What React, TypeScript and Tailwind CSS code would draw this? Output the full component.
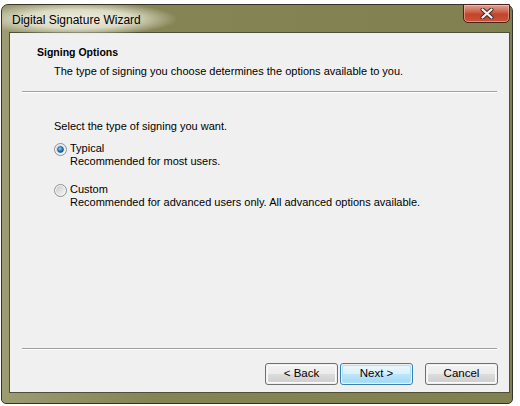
import React from "react";

const font = { fontFamily: '"Liberation Sans", Arial, sans-serif' };

function Radio({ checked }: { checked: boolean }) {
  return (
    <svg width="13" height="13" viewBox="0 0 13 13" className="shrink-0">
      <defs>
        <linearGradient id={checked ? "rbg1" : "rbg2"} x1="0" y1="0" x2="1" y2="1">
          <stop offset="0" stopColor="#cbcbcb" />
          <stop offset="1" stopColor="#f6f6f6" />
        </linearGradient>
        <radialGradient id="dot" cx="0.4" cy="0.35" r="0.7">
          <stop offset="0" stopColor="#8ad4ff" />
          <stop offset="0.5" stopColor="#2c8ad8" />
          <stop offset="1" stopColor="#0c3f7a" />
        </radialGradient>
      </defs>
      <circle cx="6.5" cy="6.5" r="6" fill="#f4f4f4" stroke="#8e8f8f" strokeWidth="1" />
      <circle cx="6.5" cy="6.5" r="4.5" fill={`url(#${checked ? "rbg1" : "rbg2"})`} />
      {checked && <circle cx="6.5" cy="6.5" r="3" fill="url(#dot)" stroke="#1c5180" strokeWidth="0.6" />}
    </svg>
  );
}

function Btn({ label, def }: { label: string; def?: boolean }) {
  return (
    <div
      className={`w-[73px] h-[22px] rounded-[3px] border ${def ? "border-[#3c7fb1]" : "border-[#707070]"} p-px`}
    >
      <div
        className={`w-full h-full rounded-[2px] border ${def ? "border-[#a8e4f8]" : "border-[#fbfbfb]"} flex items-center justify-center text-[11.5px] text-black leading-none`}
        style={{
          background: def
            ? "linear-gradient(#eaf6fd 0%, #d9f0fc 50%, #bee6fd 50%, #a7d9f5 100%)"
            : "linear-gradient(#f2f2f2 0%, #ebebeb 50%, #dddddd 50%, #cfcfcf 100%)",
        }}
      >
        <span>{label}</span>
      </div>
    </div>
  );
}

export default function App() {
  return (
    <div className="w-[520px] h-[406px] bg-white pt-[4px] pl-[1px]" style={font}>
      <div
        className="relative w-[512px] h-[400px] border border-[#34342a] rounded-t-[7px] rounded-b-[5px] flex flex-col"
        style={{ background: "linear-gradient(90deg, #9c9b72 0%, #858455 30%, #818050 100%)" }}
      >
        {/* title glow */}
        <div
          className="absolute left-0 top-0 w-[200px] h-[30px] pointer-events-none"
          style={{
            background:
              "radial-gradient(ellipse 100px 17px at 76px 14px, rgba(240,239,225,1) 0%, rgba(228,227,208,0.9) 55%, rgba(200,198,170,0) 100%)",
          }}
        />
        <div className="relative h-[27px] flex items-center pl-[10px] text-[12px] text-black">
          <span className="mt-[2px]">Digital Signature Wizard</span>
        </div>
        {/* close button */}
        <div
          className="absolute right-[2px] -top-px w-[47px] h-[19px] rounded-b-[5px] border border-[#4a2118] flex items-center justify-center"
          style={{
            background: "linear-gradient(#e0a394 0%, #cf6b55 35%, #c2442a 55%, #c9543b 100%)",
            boxShadow: "inset 0 0 0 1px rgba(255,220,210,0.45)",
          }}
        >
          <svg width="14" height="11" viewBox="0 0 14 11">
            <path d="M2.5 1.5 L11.5 9.5 M11.5 1.5 L2.5 9.5" stroke="#3b2420" strokeWidth="4" strokeLinecap="round" />
            <path d="M2.5 1.5 L11.5 9.5 M11.5 1.5 L2.5 9.5" stroke="#f2f2f2" strokeWidth="2.3" strokeLinecap="round" />
          </svg>
        </div>
        {/* content */}
        <div className="ml-[7px] mr-[2px] border border-[#4e4e3c] bg-[#f0f0f0] h-[361px] flex flex-col text-[11px] text-black">
          <div className="h-[58px] flex flex-col">
            <div className="pl-[27px] pt-[11px] font-bold leading-[16px] text-[10.5px]">Signing Options</div>
            <div className="pl-[44px] pt-[3px] leading-[16px]">
              The type of signing you choose determines the options available to you.
            </div>
          </div>
          <div className="mx-[12px] h-px bg-[#a0a0a0] shadow-[0_1px_0_#ffffff]" />
          <div className="flex-1 pl-[44px] pt-[28px] leading-[13px]">
            <div>Select the type of signing you want.</div>
            <div className="mt-[9px] flex items-start gap-[3px]">
              <div className="pt-[1px]">
                <Radio checked />
              </div>
              <div>
                <div>Typical</div>
                <div>Recommended for most users.</div>
              </div>
            </div>
            <div className="mt-[15px] flex items-start gap-[3px]">
              <div className="pt-[1px]">
                <Radio checked={false} />
              </div>
              <div>
                <div>Custom</div>
                <div>Recommended for advanced users only. All advanced options available.</div>
              </div>
            </div>
          </div>
          <div className="mx-[12px] h-px bg-[#a0a0a0] shadow-[0_1px_0_#ffffff]" />
          <div className="h-[43px] flex items-start justify-end pr-[11px] pt-[14px]">
            <Btn label="< Back" />
            <div className="w-[2px]" />
            <Btn label="Next >" def />
            <div className="w-[12px]" />
            <Btn label="Cancel" />
          </div>
        </div>
        <div className="flex-1" />
      </div>
    </div>
  );
}
